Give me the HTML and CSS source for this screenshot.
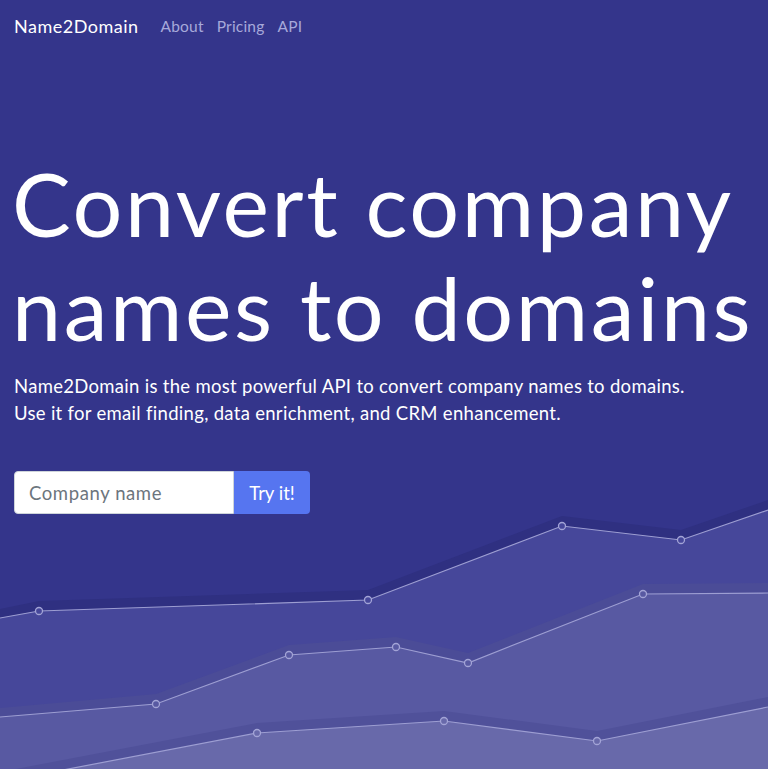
FILE: index.html
```html
<!DOCTYPE html>
<html lang="en">
<head>
<meta charset="utf-8">
<title>Name2Domain</title>
<link rel="stylesheet" href="styles.css">
</head>
<body>
<div class="page">
  <svg class="waves" viewBox="0 0 768 269" width="768" height="269" aria-hidden="true">
    <polygon class="sh1" points="0,109 39,101 368,90 562,16 681,30 768,0 768,269 0,269"/>
    <polygon class="l1" points="0,118 39,111 368,100 562,26 681,40 768,10 768,269 0,269"/>
    <polygon class="sh2" points="0,208 156,194 289,145 396,137 468,153 643,84 768,83 768,269 0,269"/>
    <polygon class="l2" points="0,217 156,204 289,155 396,147 468,163 643,94 768,93 768,269 0,269"/>
    <polygon class="sh3" points="0,272 257,223 444,211 597,231 768,197 768,269 0,269"/>
    <polygon class="l3" points="0,282 257,233 444,221 597,241 768,207 768,269 0,269"/>
    <polyline class="ln" points="0,118 39,111 368,100 562,26 681,40 768,10"/>
    <polyline class="ln" points="0,217 156,204 289,155 396,147 468,163 643,94 768,93"/>
    <polyline class="ln" points="0,282 257,233 444,221 597,241 768,207"/>
    <g class="dots1">
      <circle cx="39" cy="111" r="3.5"/><circle cx="368" cy="100" r="3.5"/><circle cx="562" cy="26" r="3.5"/><circle cx="681" cy="40" r="3.5"/>
    </g>
    <g class="dots2">
      <circle cx="156" cy="204" r="3.5"/><circle cx="289" cy="155" r="3.5"/><circle cx="396" cy="147" r="3.5"/><circle cx="468" cy="163" r="3.5"/><circle cx="643" cy="94" r="3.5"/>
    </g>
    <g class="dots3">
      <circle cx="257" cy="233" r="3.5"/><circle cx="444" cy="221" r="3.5"/><circle cx="597" cy="241" r="3.5"/>
    </g>
  </svg>
  <header class="nav">
    <a class="brand" href="#">Name2Domain</a>
    <a class="link" href="#">About</a>
    <a class="link" href="#">Pricing</a>
    <a class="link" href="#">API</a>
  </header>
  <main class="hero">
    <h1 class="title">Convert company names to domains</h1>
    <p class="lead">Name2Domain is the most powerful API to convert company names to domains.<br>Use it for email finding, data enrichment, and CRM enhancement.</p>
    <form class="search">
      <input class="field" type="text" placeholder="Company name">
      <button class="btn" type="button">Try it!</button>
    </form>
  </main>
</div>
</body>
</html>
```
FILE: styles.css
```css
html, body {
  margin: 0;
  padding: 0;
}
body {
  background: #34358b;
  font-family: "Lato", "Open Sans", sans-serif;
  color: #fff;
  overflow: hidden;
}
.page {
  position: relative;
  width: 768px;
  height: 769px;
  overflow: hidden;
}
.waves {
  position: absolute;
  left: 0;
  top: 500px;
  display: block;
}
.sh1 { fill: #2f3081; }
.l1 { fill: #46479a; }
.sh2 { fill: #4b4c97; }
.l2 { fill: #5859a2; }
.sh3 { fill: #50519a; }
.l3 { fill: #6869aa; }
.ln { fill: none; stroke: #9d9ed2; stroke-width: 1.2; }
.dots1 circle { fill: #46479a; stroke: #a3a4d6; stroke-width: 1.3; }
.dots2 circle { fill: #5859a2; stroke: #a3a4d6; stroke-width: 1.3; }
.dots3 circle { fill: #6869aa; stroke: #a3a4d6; stroke-width: 1.3; }

.nav {
  position: relative;
  display: flex;
  align-items: center;
  height: 52px;
  padding: 0 14px;
  gap: 13px;
}
.brand {
  color: #fff;
  text-decoration: none;
  font-size: 18px;
  letter-spacing: 0.5px;
  margin-right: 9px;
}
.link {
  color: #a7a9da;
  text-decoration: none;
  font-size: 15.5px;
  letter-spacing: 0.2px;
}
.hero {
  position: relative;
  padding: 0 12px;
}
.title {
  margin: 99px 0 0;
  font-weight: 400;
  font-size: 88px;
  line-height: 104px;
  letter-spacing: 2.6px;
}
.lead {
  margin: 14px 2px 0;
  font-size: 18.5px;
  line-height: 27px;
  letter-spacing: 0.3px;
}
.search {
  display: flex;
  margin: 44px 2px 0;
}
.field {
  width: 220px;
  height: 43px;
  box-sizing: border-box;
  border: 1px solid #ced4da;
  border-radius: 4px 0 0 4px;
  padding: 0 14px;
  font-family: inherit;
  font-size: 18.5px;
  letter-spacing: 0.6px;
  color: #495057;
  background: #fff;
  outline: none;
}
.field::placeholder { color: #6c757d; }
.btn {
  width: 76px;
  height: 43px;
  border: none;
  border-radius: 0 4px 4px 0;
  background: #5675f0;
  color: #fff;
  font-family: inherit;
  font-size: 18.5px;
  padding: 0;
}
```
